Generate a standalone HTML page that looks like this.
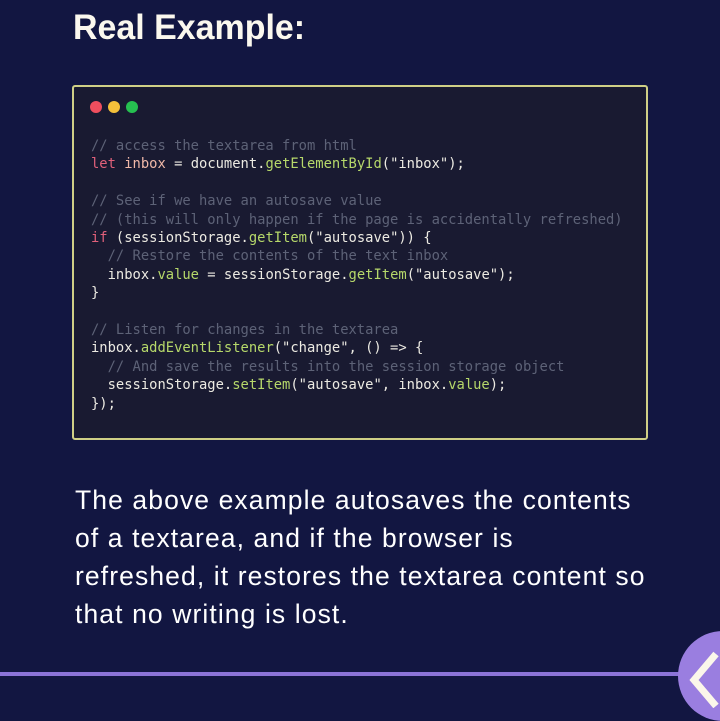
<!DOCTYPE html>
<html><head><meta charset="utf-8"><style>
html,body{margin:0;padding:0}
body{width:720px;height:720px;background:#121641;position:relative;overflow:hidden;font-family:"Liberation Sans",sans-serif}
h1{position:absolute;left:73px;top:8px;margin:0;color:#fbf8ee;font-size:35px;font-weight:bold;transform:scaleX(0.97);transform-origin:left top;white-space:nowrap}
.box{position:absolute;left:72px;top:85px;width:576px;height:355px;background:#191a31;border:2px solid #cfcf86;border-radius:3px;box-sizing:border-box}
.dot{position:absolute;top:14px;width:12px;height:12px;border-radius:50%}
pre{position:absolute;left:17px;top:50px;margin:0;font-family:"DejaVu Sans Mono","Liberation Mono",monospace;font-size:13.8px;line-height:18.4px;color:#eceae2}
.c{color:#5d6277}.k{color:#e0607a}.v{color:#f0b8a8}.f{color:#b6d86a}.p{color:#b6d86a}
p{position:absolute;left:75px;top:481px;margin:0;color:#fff;font-size:26.5px;line-height:38px;width:640px;letter-spacing:1.1px;white-space:nowrap}
.line{position:absolute;left:0;top:672px;width:690px;height:4px;background:#8c74d8}
.btn{position:absolute;left:678px;top:631px;width:90px;height:90px;border-radius:50%;background:#9a7ee0}
</style></head><body>
<h1>Real Example:</h1>
<div class="box">
<div class="dot" style="left:16px;background:#ef4e5e"></div>
<div class="dot" style="left:34px;background:#f4c03a"></div>
<div class="dot" style="left:52px;background:#26c050"></div>
<pre><span class="c">// access the textarea from html</span>
<span class="k">let</span> <span class="v">inbox</span> = document.<span class="f">getElementById</span>("inbox");

<span class="c">// See if we have an autosave value</span>
<span class="c">// (this will only happen if the page is accidentally refreshed)</span>
<span class="k">if</span> (sessionStorage.<span class="f">getItem</span>("autosave")) {
  <span class="c">// Restore the contents of the text inbox</span>
  inbox.<span class="p">value</span> = sessionStorage.<span class="f">getItem</span>("autosave");
}

<span class="c">// Listen for changes in the textarea</span>
inbox.<span class="f">addEventListener</span>("change", () =&gt; {
  <span class="c">// And save the results into the session storage object</span>
  sessionStorage.<span class="f">setItem</span>("autosave", inbox.<span class="p">value</span>);
});</pre>
</div>
<p>The above example autosaves the contents<br>of a textarea, and if the browser is<br>refreshed, it restores the textarea content so<br>that no writing is lost.</p>
<div class="line"></div>
<div class="btn"></div>
<svg style="position:absolute;left:680px;top:648px" width="40" height="60"><path d="M36 6 L14 32 L36 58" fill="none" stroke="#fbf6ea" stroke-width="7" stroke-linejoin="miter"/></svg>
</body></html>
